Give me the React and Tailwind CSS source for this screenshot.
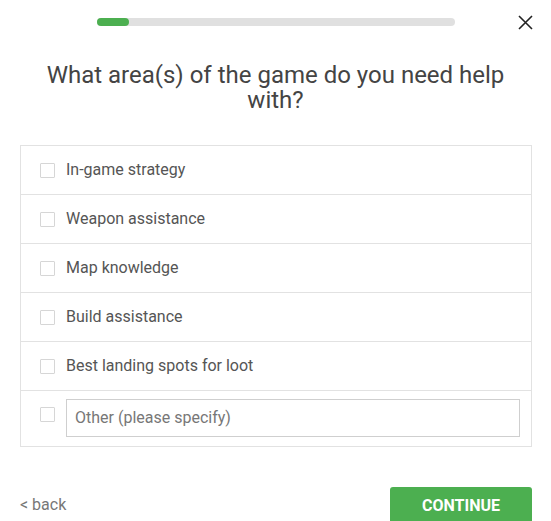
import React from "react";

const options = [
  "In-game strategy",
  "Weapon assistance",
  "Map knowledge",
  "Build assistance",
  "Best landing spots for loot",
];

function Box() {
  return <span className="block w-[15px] h-[15px] shrink-0 border border-[#d6d6d6] bg-white rounded-[1px]" />;
}

export default function App() {
  return (
    <div className="w-[551px] h-[521px] overflow-hidden bg-white font-['Roboto',sans-serif] text-[#555]">
      {/* Top bar */}
      <div className="flex items-center h-[42px] pt-[2px]">
        <div className="ml-[97px] w-[358px] h-[8px] rounded-full bg-[#e0e0e0]">
          <div className="w-[32px] h-full rounded-full bg-[#4caf50]" />
        </div>
        <svg className="ml-[63px]" width="15" height="15" viewBox="0 0 15 15">
          <path d="M1 1L14 14M14 1L1 14" stroke="#222" strokeWidth="1.6" />
        </svg>
      </div>

      <h1 className="mt-[21px] text-center text-[24px] leading-[25px] text-[#444] px-[40px]">
        What area(s) of the game do you need help with?
      </h1>

      {/* Options */}
      <div className="mt-[32px] mx-[20px] w-[512px] border border-[#e2e2e2]">
        {options.map((o) => (
          <div key={o} className="flex items-center h-[49px] pl-[19px] gap-[11px] border-b border-[#e2e2e2]">
            <Box />
            <span className="text-[16px]">{o}</span>
          </div>
        ))}
        <div className="flex items-start h-[55px] pl-[19px] pt-[8px] gap-[11px]">
          <span className="mt-[8px]"><Box /></span>
          <div className="w-[454px] h-[38px] border border-[#cfcfcf] flex items-center pl-[8px] text-[16px] text-[#777]">
            Other (please specify)
          </div>
        </div>
      </div>

      {/* Footer */}
      <div className="mt-[40px] flex items-end justify-between mx-[20px] w-[512px]">
        <span className="text-[16px] text-[#777] mb-[8px]">&lt; back</span>
        <button className="w-[142px] h-[38px] rounded-[3px] bg-[#4caf50] text-white font-bold text-[16px]">
          CONTINUE
        </button>
      </div>
    </div>
  );
}
